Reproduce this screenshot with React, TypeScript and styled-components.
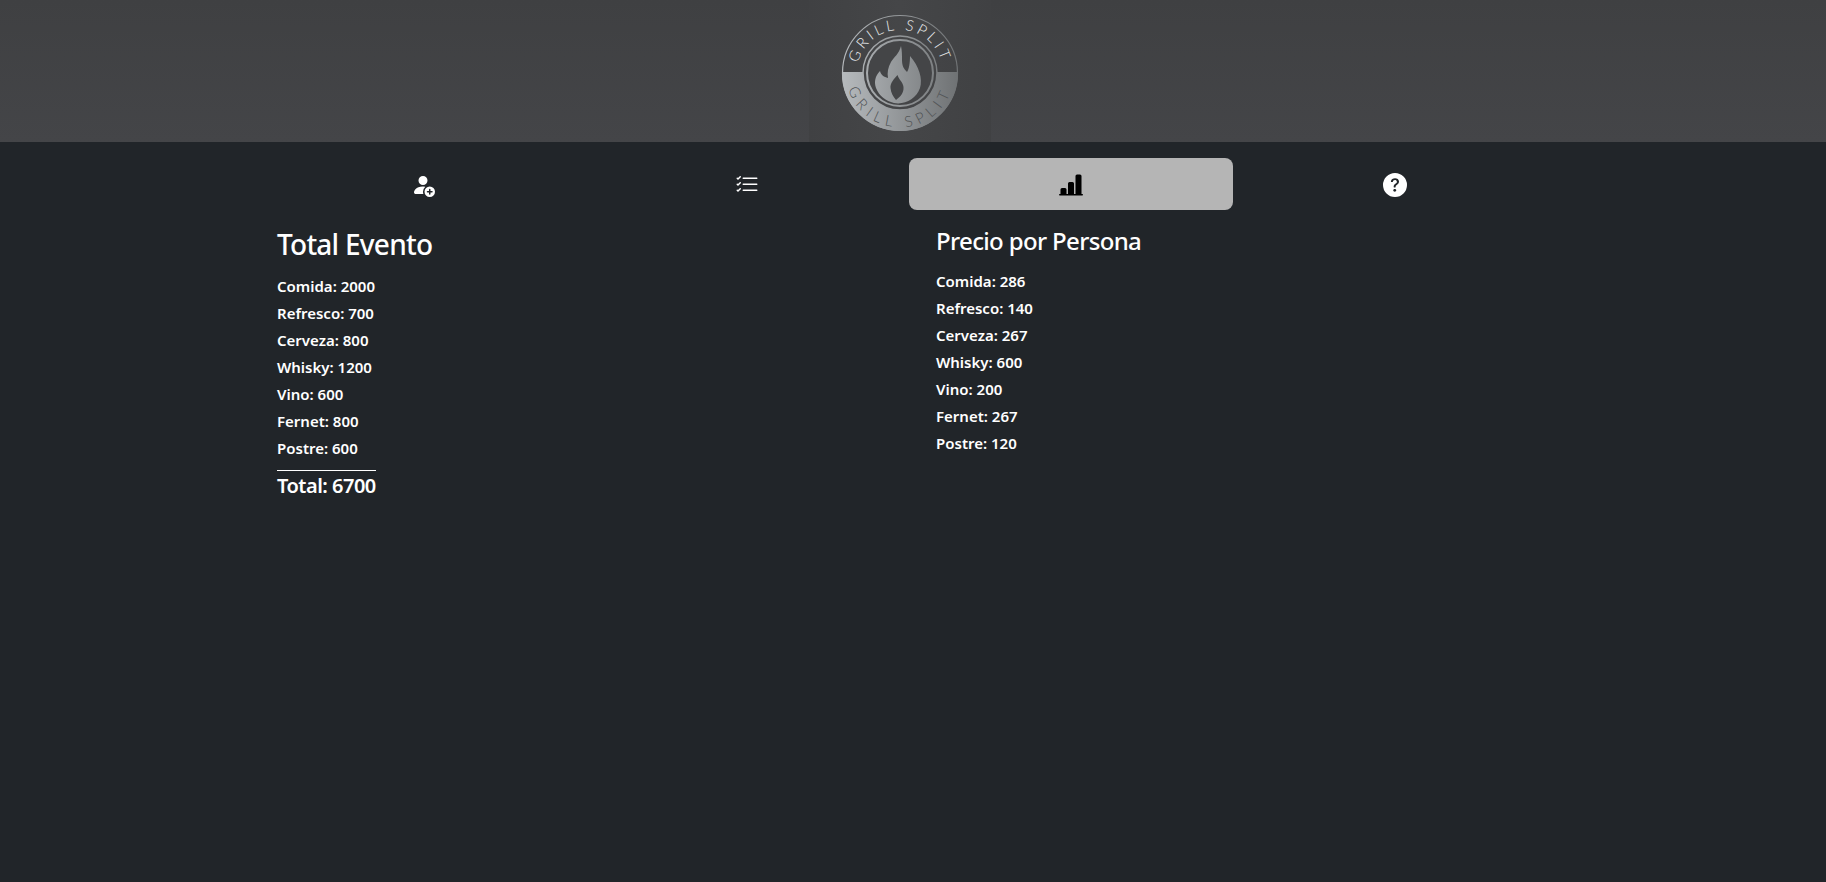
import React from "react";
import styled, { createGlobalStyle } from "styled-components";
import { BsPersonFillAdd, BsListCheck, BsBarChartLineFill, BsQuestionCircleFill } from "react-icons/bs";

const GlobalStyle = createGlobalStyle`
  html, body {
    margin: 0;
    min-height: 100%;
    background: #212529;
    color: #fff;
    font-family: "Noto Sans", "Open Sans", sans-serif;
    font-size: 16px;
    line-height: 1.5;
  }
`;

const Page = styled.div`
  height: 882px;
  overflow: hidden;
`;

const Header = styled.header`
  height: 142px;
  background: linear-gradient(#3f4042, #444548);
  display: flex;
  justify-content: center;
  padding-right: 26px;
`;

const LogoBox = styled.div`
  width: 182px;
  height: 142px;
  background: linear-gradient(90deg, #404143, #454648 50%, #404143);
`;

const Main = styled.main`
  width: 1296px;
  margin-left: 261px;
`;

const Tabs = styled.nav`
  display: grid;
  grid-template-columns: repeat(4, 1fr);
  padding-top: 16px;
`;

type TabProps = { $active?: boolean };
const Tab = styled.button<TabProps>`
  height: 52px;
  border: 0;
  border-radius: 8px;
  display: flex;
  align-items: center;
  justify-content: center;
  font-size: 24px;
  padding: 2px 0 0;
  color: ${(p) => (p.$active ? "#000" : "#fff")};
  background: ${(p) => (p.$active ? "#b5b5b5" : "transparent")};
`;

const Columns = styled.div`
  display: flex;
  padding: 18px 0 0 16px;
`;

const LeftColumn = styled.section`
  width: 659px;
`;

const RightColumn = styled.section`
  flex: 1;
`;

const EventTitle = styled.h3`
  margin: 0 0 12px;
  font-size: 28px;
  font-weight: 500;
  line-height: 1.2;
  letter-spacing: -0.75px;
`;

const PersonTitle = styled.h4`
  margin: -1px 0 13px;
  font-size: 24px;
  font-weight: 500;
  line-height: 1.2;
  letter-spacing: -0.65px;
`;

const Item = styled.p`
  margin: 0 0 3px;
  font-size: 15px;
  font-weight: 600;
  line-height: 24px;
`;

const Total = styled.div`
  display: inline-block;
  margin-top: 7px;
  border-top: 1px solid #fff;
  font-size: 20px;
  font-weight: 600;
  line-height: 30px;
  letter-spacing: -0.5px;
`;

const Logo = () => (
  <svg width="182" height="142" viewBox="0 0 182 142">
    <defs>
      <linearGradient id="metal" gradientUnits="userSpaceOnUse" x1="33" y1="0" x2="149" y2="0">
        <stop offset="0" stopColor="#b6babd" />
        <stop offset="1" stopColor="#6f7274" />
      </linearGradient>
      <clipPath id="lower">
        <rect x="0" y="72" width="182" height="70" />
      </clipPath>
      <path id="arcTop" d="M 50.6 87.7 A 43 43 0 1 1 131.4 87.7" />
      <path id="arcBottom" d="M 40.2 55 A 54 54 0 1 0 141.8 55" />
    </defs>
    <circle cx="91" cy="73" r="57.5" fill="none" stroke="url(#metal)" strokeWidth="1.2" />
    <circle cx="91" cy="73" r="58" fill="url(#metal)" clipPath="url(#lower)" />
    <circle cx="91" cy="73" r="37" fill="#444547" stroke="url(#metal)" strokeWidth="1.5" />
    <circle cx="91" cy="73" r="33" fill="#444547" stroke="url(#metal)" strokeWidth="2" />
    <path
      fill="url(#metal)"
      fillRule="evenodd"
      d="M92 46 C90 54 85 57 82 62 C79 67 78 73 79 78 C75 77 72 75 71 71 C66 76 65 82 67 88 C70 96 77 101 85 103 C96 105 107 99 111 88 C114 79 110 66 101 56 C101 63 100 69 98 72 C95 69 93 66 93 60 C93 55 93 51 92 46 Z M88.5 75 C85 79 81 83 81.5 88 C82 93 84 96 87 100 C91 97 95 93 94.5 87 C94 82 90 80 88.5 75 Z"
    />
    <text fill="#e8eaeb" fontFamily="Lato, sans-serif" fontSize="15" fontWeight="300" letterSpacing="3.2">
      <textPath href="#arcTop" startOffset="50%" textAnchor="middle">GRILL SPLIT</textPath>
    </text>
    <text fill="#505355" fontFamily="Lato, sans-serif" fontSize="15" fontWeight="300" letterSpacing="5.2">
      <textPath href="#arcBottom" startOffset="50%" textAnchor="middle">GRILL SPLIT</textPath>
    </text>
  </svg>
);

const totals = [
  ["Comida", 2000],
  ["Refresco", 700],
  ["Cerveza", 800],
  ["Whisky", 1200],
  ["Vino", 600],
  ["Fernet", 800],
  ["Postre", 600],
];

const perPerson = [
  ["Comida", 286],
  ["Refresco", 140],
  ["Cerveza", 267],
  ["Whisky", 600],
  ["Vino", 200],
  ["Fernet", 267],
  ["Postre", 120],
];

export default function App() {
  return (
    <Page>
      <GlobalStyle />
      <Header>
        <LogoBox>
          <Logo />
        </LogoBox>
      </Header>
      <Main>
        <Tabs>
          <Tab><BsPersonFillAdd /></Tab>
          <Tab><BsListCheck /></Tab>
          <Tab $active><BsBarChartLineFill /></Tab>
          <Tab><BsQuestionCircleFill /></Tab>
        </Tabs>
        <Columns>
          <LeftColumn>
            <EventTitle>Total Evento</EventTitle>
            {totals.map(([name, value]) => (
              <Item key={name}>{name}: {value}</Item>
            ))}
            <Total>Total: 6700</Total>
          </LeftColumn>
          <RightColumn>
            <PersonTitle>Precio por Persona</PersonTitle>
            {perPerson.map(([name, value]) => (
              <Item key={name}>{name}: {value}</Item>
            ))}
          </RightColumn>
        </Columns>
      </Main>
    </Page>
  );
}
